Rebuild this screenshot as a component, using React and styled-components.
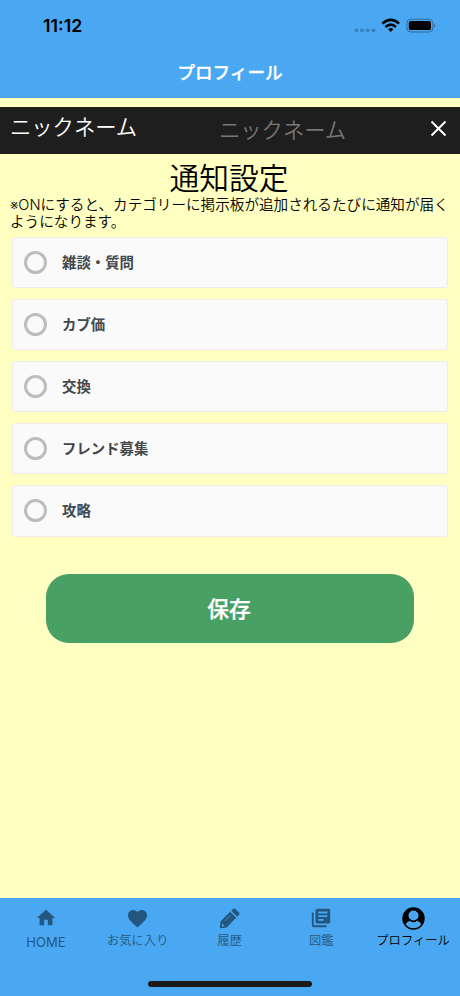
import { useState } from "react";
import styled, { createGlobalStyle } from "styled-components";
import { MdFavorite, MdHome, MdLibraryBooks } from "react-icons/md";

const GlobalStyle = createGlobalStyle`
  * {
    box-sizing: border-box;
  }

  body {
    margin: 0;
    font-family: "Inter", "Noto Sans CJK JP", sans-serif;
  }

  button {
    font-family: inherit;
    border: none;
    padding: 0;
    cursor: pointer;
  }
`;

const Screen = styled.div`
  display: flex;
  flex-direction: column;
  width: 460px;
  height: 996px;
  background-color: #ffffc1;
  overflow: hidden;
`;

const StatusBar = styled.div`
  display: flex;
  justify-content: space-between;
  align-items: center;
  height: 51px;
  padding: 0 24px 0 43px;
  background-color: #4aa7f2;
`;

const Clock = styled.span`
  font-size: 17.8px;
  font-weight: 600;
  line-height: 20px;
  color: #000;
`;

const StatusIcons = styled.svg`
  width: 84px;
  height: 20px;
`;

const Header = styled.header`
  display: flex;
  justify-content: center;
  align-items: center;
  height: 47px;
  padding-bottom: 4px;
  background-color: #4aa7f2;
`;

const HeaderTitle = styled.h1`
  margin: 0;
  font-size: 17.6px;
  font-weight: 500;
  line-height: 24px;
  color: #fff;
  -webkit-text-stroke: 0.3px #fff;
`;

const Content = styled.main`
  flex: 1;
  padding-top: 9px;
`;

const NicknameRow = styled.div`
  display: flex;
  height: 46.5px;
  padding: 0 13px 0 10px;
  background-color: #1e1e1e;
`;

const NicknameLabel = styled.label`
  width: 209px;
  font-size: 21.3px;
  line-height: 41px;
  color: #fff;
  font-weight: 350;
`;

const NicknameInput = styled.input`
  flex: 1;
  min-width: 0;
  height: 46px;
  padding: 0;
  border: none;
  outline: none;
  background: none;
  font-family: inherit;
  font-size: 21.3px;
  font-weight: 350;
  color: #fff;

  &::placeholder {
    color: #777;
  }
`;

const ClearButton = styled.button`
  display: flex;
  align-items: center;
  height: 43px;
  background: none;
`;

const SectionTitle = styled.h2`
  margin: 6.5px 2px 0 0;
  font-size: 29.8px;
  font-weight: 350;
  line-height: 36px;
  text-align: center;
  color: #000;
`;

const Note = styled.p`
  margin: 0;
  padding: 1px 8px 0 10px;
  font-size: 14.6px;
  font-weight: 350;
  line-height: 17px;
  color: #000;
`;

const CategoryList = styled.div`
  display: flex;
  flex-direction: column;
  gap: 11px;
  padding: 5.6px 12px 0;
`;

const CategoryItem = styled.button`
  display: flex;
  align-items: center;
  gap: 15px;
  height: 51.2px;
  padding: 0 11px;
  border: 1px solid #ededed;
  border-radius: 3px;
  background-color: #fafafa;
`;

const CategoryName = styled.span`
  padding-bottom: 2px;
  font-size: 14.4px;
  font-weight: 700;
  color: #43484d;
`;

const Radio = styled.span`
  width: 23px;
  height: 23px;
  border: 3px solid ${({ $checked }) => ($checked ? "#48a065" : "#bdbdbd")};
  border-radius: 50%;
`;

const SaveButton = styled.button`
  display: block;
  width: 368px;
  height: 69px;
  margin: 37.4px auto 0 46px;
  padding: 0 2px 2px 0;
  border-radius: 23px;
  background-color: #48a065;
  font-size: 21.8px;
  font-weight: 500;
  color: #fff;
  -webkit-text-stroke: 0.3px #fff;
`;

const TabBar = styled.nav`
  display: flex;
  flex-direction: column;
  justify-content: space-between;
  align-items: center;
  height: 98px;
  padding-bottom: 9px;
  background-color: #4aa7f2;
`;

const Tabs = styled.div`
  display: grid;
  grid-template-columns: repeat(5, 1fr);
  width: 100%;
  padding-right: 1px;
`;

const Tab = styled.button`
  display: flex;
  flex-direction: column;
  align-items: center;
  padding-top: 6px;
  background: none;
  line-height: 18px;
  white-space: nowrap;
  color: ${({ $active }) => ($active ? "#000" : "#24577f")};
`;

const TabIcon = styled.span`
  display: flex;
  justify-content: center;
  align-items: center;
  height: 28px;
`;

const TabLabel = styled.span`
  padding-top: ${({ $latin }) => ($latin ? "1px" : "0")};
  font-size: ${({ $latin }) => ($latin ? "13px" : "12.3px")};
  font-weight: ${({ $latin }) => ($latin ? 400 : 350)};
`;

const HomeIndicator = styled.div`
  width: 164px;
  height: 6px;
  border-radius: 3px;
  background-color: #1b1b1b;
`;

const PencilIcon = () => (
  <svg width="21" height="21" viewBox="0 0 20 20" fill="currentColor">
    <path d="M1.4 12.8 L10.6 3.6 L16.4 9.4 L7.2 18.6 L0.8 19.3 Z" />
    <path d="M11.6 2.6 L13.4 0.9 Q14.6 0 15.7 1 L19 4.3 Q20 5.4 19.1 6.6 L17.4 8.4 Z" />
    <path d="M3 14.8 L2.6 17.5 L5.4 17.1 Z" fill="#4aa7f2" />
    <path d="M5.4 12.4 L11 6.8" fill="none" stroke="#4aa7f2" strokeWidth="0.6" />
  </svg>
);

const ProfileIcon = () => (
  <svg width="23" height="23" viewBox="0 0 23 23">
    <circle cx="11.5" cy="11.5" r="11.2" fill="currentColor" />
    <path
      d="M3.7 17.2 Q5 14.6 8 13.8 Q11.5 16.8 15 13.8 Q18 14.6 19.3 17.2 Q16.4 21.2 11.5 21.2 Q6.6 21.2 3.7 17.2 Z"
      fill="#4aa7f2"
    />
    <circle cx="11.5" cy="8.5" r="5" fill="#4aa7f2" />
  </svg>
);

const categories = ["雑談・質問", "カブ価", "交換", "フレンド募集", "攻略"];

const tabs = [
  { label: "HOME", icon: <MdHome size={22} />, latin: true },
  { label: "お気に入り", icon: <MdFavorite size={23} /> },
  { label: "履歴", icon: <PencilIcon /> },
  { label: "図鑑", icon: <MdLibraryBooks size={22} /> },
  { label: "プロフィール", icon: <ProfileIcon />, active: true },
];

const App = () => {
  const [nickname, setNickname] = useState("");
  const [selected, setSelected] = useState([]);

  const toggleCategory = (name) => {
    setSelected((prev) =>
      prev.includes(name) ? prev.filter((c) => c !== name) : [...prev, name]
    );
  };

  return (
    <Screen>
      <GlobalStyle />
      <StatusBar>
        <Clock>11:12</Clock>
        <StatusIcons viewBox="-1.8 0 84 20">
          <g fill="#3681bd">
            <circle cx="2.5" cy="14.3" r="1.9" />
            <circle cx="8.2" cy="14.3" r="1.9" />
            <circle cx="13.9" cy="14.3" r="1.9" />
            <circle cx="19.6" cy="14.3" r="1.9" />
          </g>
          <g fill="none" stroke="#000" strokeWidth="2.6">
            <path d="M28.6 7.6 Q36.9 0 45.2 7.6" />
            <path d="M31.7 11 Q36.9 6.2 42.1 11" />
          </g>
          <path d="M36.9 16 L34.3 13.2 Q36.9 11 39.5 13.2 Z" />
          <rect x="53.1" y="3.2" width="26" height="12.8" rx="4" fill="none" stroke="#2f6b9b" />
          <rect x="55" y="5.1" width="22.2" height="9" rx="2.2" />
          <path d="M80.3 7.3 Q82.4 9.5 80.3 11.7 Z" fill="#2f6b9b" />
        </StatusIcons>
      </StatusBar>
      <Header>
        <HeaderTitle>プロフィール</HeaderTitle>
      </Header>

      <Content>
        <NicknameRow>
          <NicknameLabel htmlFor="nickname">ニックネーム</NicknameLabel>
          <NicknameInput
            id="nickname"
            placeholder="ニックネーム"
            value={nickname}
            onChange={(e) => setNickname(e.target.value)}
          />
          <ClearButton onClick={() => setNickname("")}>
            <svg width="17" height="17" viewBox="0 0 17 17">
              <path d="M1.5 1.5 L15.5 15.5 M15.5 1.5 L1.5 15.5" stroke="#fff" strokeWidth="2" />
            </svg>
          </ClearButton>
        </NicknameRow>

        <SectionTitle>通知設定</SectionTitle>
        <Note>
          ※ONにすると、カテゴリーに掲示板が追加されるたびに通知が届くようになります。
        </Note>

        <CategoryList>
          {categories.map((name) => (
            <CategoryItem key={name} onClick={() => toggleCategory(name)}>
              <Radio $checked={selected.includes(name)} />
              <CategoryName>{name}</CategoryName>
            </CategoryItem>
          ))}
        </CategoryList>

        <SaveButton>保存</SaveButton>
      </Content>

      <TabBar>
        <Tabs>
          {tabs.map(({ label, icon, latin, active }) => (
            <Tab key={label} $active={active}>
              <TabIcon>{icon}</TabIcon>
              <TabLabel $latin={latin}>{label}</TabLabel>
            </Tab>
          ))}
        </Tabs>
        <HomeIndicator />
      </TabBar>
    </Screen>
  );
};

export default App;
